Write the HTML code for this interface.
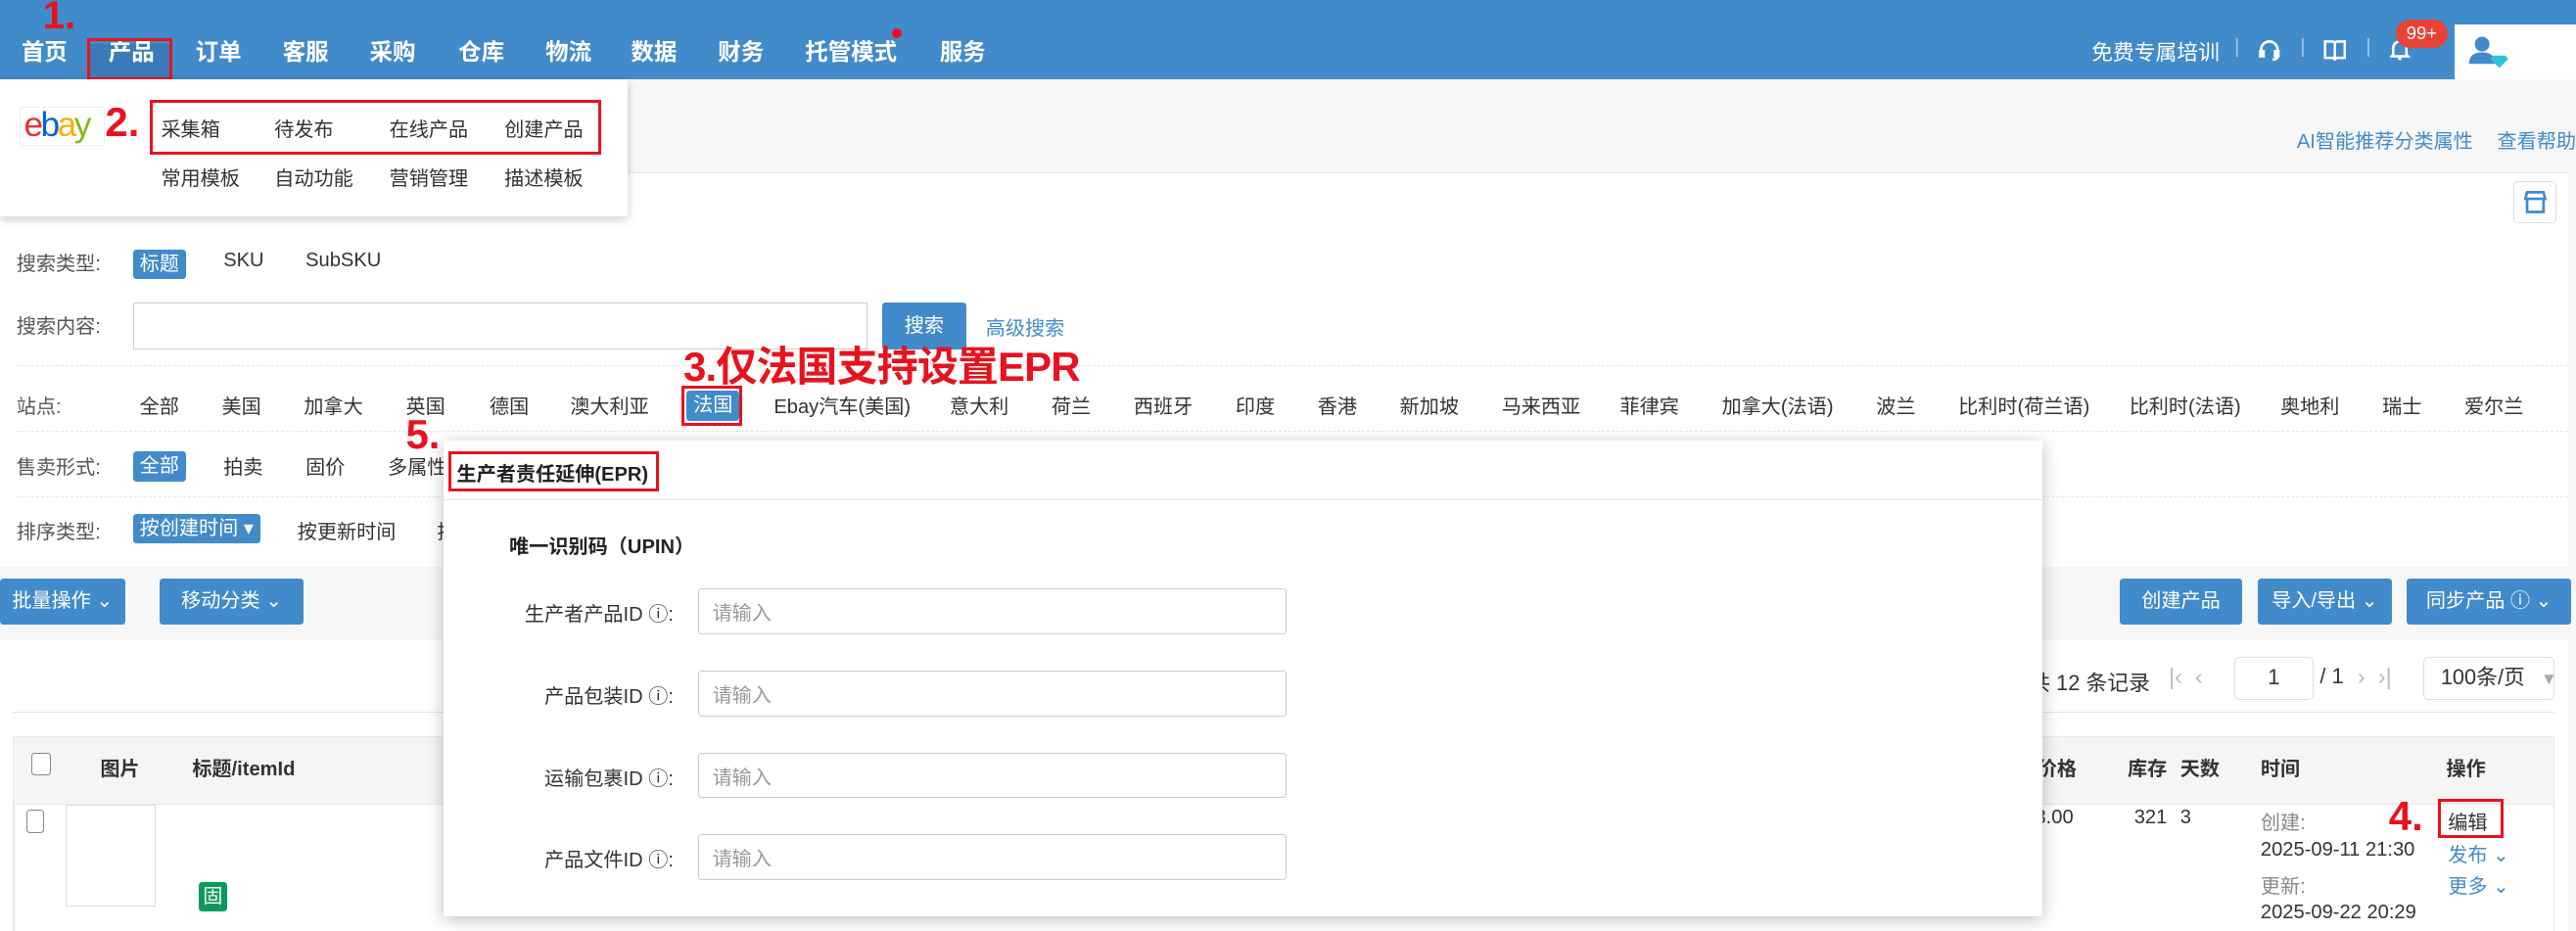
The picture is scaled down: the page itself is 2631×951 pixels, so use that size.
<!DOCTYPE html>
<html><head><meta charset="utf-8"><style>
*{margin:0;padding:0;box-sizing:border-box}
html,body{width:2631px;height:951px;overflow:hidden;background:#f7f7f7}
#w{zoom:1.678;width:1568px;height:567px;position:relative;font-family:"Liberation Sans","Noto Sans CJK SC",sans-serif;font-size:12px;color:#333}
.a{position:absolute;white-space:nowrap}
.nav{position:absolute;left:0;top:0;width:1568px;height:48px;background:#428bca}
.nv{position:absolute;top:20px;color:#fff;font-weight:bold;font-size:14px}
.red{color:#e8121e;font-weight:bold}
.rb{position:absolute;border:2px solid #e8121e}
.tag{position:absolute;background:#428bca;color:#fff;padding:0 4px;height:18px;line-height:18px;border-radius:2px}
.lbl{position:absolute;left:10px;color:#555}
.dot{position:absolute;left:10px;width:1553px;border-top:1px dashed #e4e4e4}
.btn{position:absolute;background:#428bca;color:#fff;height:28px;line-height:28px;text-align:center;border-radius:2px;font-size:12px}
.inp{position:absolute;border:1px solid #ccc;background:#fff;border-radius:2px;color:#999;padding-left:8px;display:flex;align-items:center}
.blue{color:#428bca}
.gray{color:#888}
</style></head><body><div id="w">
<div class="nav"></div>
<div class="a" style="left:53px;top:27px;width:51px;height:21px;background:#3a7cb8"></div>
<div class="nv" style="left:13px">首页</div>
<div class="nv" style="left:66px">产品</div>
<div class="nv" style="left:119px">订单</div>
<div class="nv" style="left:172px">客服</div>
<div class="nv" style="left:225px">采购</div>
<div class="nv" style="left:279px">仓库</div>
<div class="nv" style="left:332px">物流</div>
<div class="nv" style="left:384px">数据</div>
<div class="nv" style="left:437px">财务</div>
<div class="nv" style="left:490px">托管模式</div>
<div class="a" style="left:543px;top:17px;width:6px;height:6px;border-radius:3px;background:#e8121e"></div>
<div class="nv" style="left:572px">服务</div>
<div class="rb" style="left:53px;top:23px;width:52px;height:26px"></div>
<div class="a red" style="left:26px;top:-4px;font-size:24px">1.</div>
<div class="a" style="left:1273px;top:22px;color:#fff;font-size:13px">免费专属培训</div>
<div class="a" style="left:1360px;top:22px;color:#a8c8e8">|</div>
<div class="a" style="left:1400px;top:22px;color:#a8c8e8">|</div>
<div class="a" style="left:1440px;top:22px;color:#a8c8e8">|</div>
<svg class="a" style="left:1374px;top:23px" width="14" height="14" viewBox="0 0 14 14" fill="none" stroke="#fff" stroke-width="1.6"><path d="M2 9V7a5 5 0 0 1 10 0v2"/><rect x="1.5" y="8" width="2" height="3" fill="#fff"/><rect x="10.5" y="8" width="2" height="3" fill="#fff"/><path d="M12 11q0 2-3 2"/></svg>
<svg class="a" style="left:1414px;top:23px" width="14" height="14" viewBox="0 0 14 14" fill="none" stroke="#fff" stroke-width="1.5"><path d="M1 2h5l1 1 1-1h5v10H8l-1 1-1-1H1z M7 3v9"/></svg>
<svg class="a" style="left:1455px;top:23px" width="12" height="14" viewBox="0 0 12 14" fill="none" stroke="#fff" stroke-width="1.5"><path d="M2 10V6a4 4 0 0 1 8 0v4l1 1H1z M5 12.5h2"/></svg>
<div class="a" style="left:1458px;top:12px;width:32px;height:17px;border-radius:9px;background:#ea4335;color:#fff;font-size:11px;text-align:center;line-height:17px">99+</div>
<div class="a" style="left:1494px;top:15px;width:74px;height:33px;background:#fff"></div>
<svg class="a" style="left:1502px;top:21px" width="26" height="22" viewBox="0 0 26 22"><circle cx="9" cy="6" r="4.5" fill="#428bca"/><path d="M1 18q0-7 8-7t8 7z" fill="#428bca"/><path d="M16 13h7l2 2-5.5 5.5L14 15z" fill="#2cc6d8"/></svg>

<div class="a blue" style="left:1398px;top:76px">AI智能推荐分类属性</div>
<div class="a blue" style="left:1520px;top:76px">查看帮助</div>

<div class="a" style="left:0;top:105px;width:1563px;height:240px;background:#fff;border-top:1px solid #e6e6e6"></div>
<div class="a" style="left:1530px;top:110px;width:26px;height:26px;border:1px solid #ddd;border-radius:3px;background:#fff"></div>
<svg class="a" style="left:1535px;top:115px" width="16" height="16" viewBox="0 0 16 16" fill="none" stroke="#428bca" stroke-width="1.6"><path d="M3 2h10l1 4H2z M3 6v8h10V6"/></svg>

<div class="lbl" style="top:151px">搜索类型:</div>
<div class="tag" style="left:81px;top:152px">标题</div>
<div class="a" style="left:136px;top:152px">SKU</div>
<div class="a" style="left:186px;top:152px">SubSKU</div>
<div class="lbl" style="top:189px">搜索内容:</div>
<div class="a" style="left:81px;top:184px;width:447px;height:29px;border:1px solid #ccc;background:#fff"></div>
<div class="btn" style="left:537px;top:184px;width:51px;height:29px;line-height:29px">搜索</div>
<div class="a blue" style="left:600px;top:190px">高级搜索</div>
<div class="dot" style="top:222px"></div>
<div class="lbl" style="top:238px">站点:</div>
<div class="a" style="left:85px;top:238px">全部</div>
<div class="a" style="left:135px;top:238px">美国</div>
<div class="a" style="left:185px;top:238px">加拿大</div>
<div class="a" style="left:247px;top:238px">英国</div>
<div class="a" style="left:298px;top:238px">德国</div>
<div class="a" style="left:347px;top:238px">澳大利亚</div>
<div class="tag" style="left:418px;top:238px">法国</div>
<div class="rb" style="left:415px;top:235px;width:37px;height:24px"></div>
<div class="a" style="left:471px;top:238px">Ebay汽车(美国)</div>
<div class="a" style="left:578px;top:238px">意大利</div>
<div class="a" style="left:640px;top:238px">荷兰</div>
<div class="a" style="left:690px;top:238px">西班牙</div>
<div class="a" style="left:752px;top:238px">印度</div>
<div class="a" style="left:802px;top:238px">香港</div>
<div class="a" style="left:852px;top:238px">新加坡</div>
<div class="a" style="left:914px;top:238px">马来西亚</div>
<div class="a" style="left:986px;top:238px">菲律宾</div>
<div class="a" style="left:1048px;top:238px">加拿大(法语)</div>
<div class="a" style="left:1142px;top:238px">波兰</div>
<div class="a" style="left:1192px;top:238px">比利时(荷兰语)</div>
<div class="a" style="left:1296px;top:238px">比利时(法语)</div>
<div class="a" style="left:1388px;top:238px">奥地利</div>
<div class="a" style="left:1450px;top:238px">瑞士</div>
<div class="a" style="left:1500px;top:238px">爱尔兰</div>
<div class="a red" style="left:416px;top:203px;font-size:25px;letter-spacing:-0.5px">3.仅法国支持设置EPR</div>
<div class="dot" style="top:262px"></div>
<div class="lbl" style="top:275px">售卖形式:</div>
<div class="tag" style="left:81px;top:275px">全部</div>
<div class="a" style="left:136px;top:275px">拍卖</div>
<div class="a" style="left:186px;top:275px">固价</div>
<div class="a" style="left:236px;top:275px">多属性</div>
<div class="dot" style="top:302px"></div>
<div class="lbl" style="top:314px">排序类型:</div>
<div class="tag" style="left:81px;top:313px">按创建时间 ▾</div>
<div class="a" style="left:181px;top:314px">按更新时间</div>
<div class="a" style="left:266px;top:314px">按</div>

<div class="btn" style="left:0;top:352px;width:76px">批量操作 ⌄</div>
<div class="btn" style="left:97px;top:352px;width:88px">移动分类 ⌄</div>
<div class="btn" style="left:1290px;top:352px;width:75px">创建产品</div>
<div class="btn" style="left:1374px;top:352px;width:82px">导入/导出 ⌄</div>
<div class="btn" style="left:1465px;top:352px;width:100px">同步产品 ⓘ ⌄</div>

<div class="a" style="left:0;top:390px;width:1563px;height:177px;background:#fff"></div>
<div class="a" style="left:1235px;top:406px;font-size:13px">共 12 条记录</div>
<div class="a" style="left:1320px;top:404px;color:#bbb;font-size:14px">|‹ &nbsp;‹</div>
<div class="a" style="left:1360px;top:400px;width:48px;height:26px;border:1px solid #ddd;border-radius:3px;text-align:center;line-height:24px;font-size:13px">1</div>
<div class="a" style="left:1412px;top:404px;font-size:13px">/ 1</div>
<div class="a" style="left:1435px;top:404px;color:#bbb;font-size:14px">› &nbsp;›|</div>
<div class="a" style="left:1475px;top:400px;width:80px;height:26px;border:1px solid #ddd;border-radius:3px;line-height:24px;padding-left:10px;font-size:13px">100条/页 <span style="color:#aaa;font-size:10px;margin-left:6px">▼</span></div>
<div class="a" style="left:8px;top:433px;width:1547px;border-top:1px solid #e4e4e4"></div>
<div class="a" style="left:8px;top:448px;width:1547px;height:42px;background:#f5f5f5;border:1px solid #e8e8e8"></div>
<div class="a" style="left:8px;top:490px;width:1px;height:77px;background:#e8e8e8"></div>
<div class="a" style="left:1554px;top:490px;width:1px;height:77px;background:#e8e8e8"></div>
<div class="a" style="left:19px;top:458px;width:12px;height:14px;border:1px solid #888;border-radius:2px;background:#fff"></div>
<div class="a" style="left:61px;top:458px;font-weight:bold">图片</div>
<div class="a" style="left:117px;top:458px;font-weight:bold">标题/itemId</div>
<div class="a" style="left:1240px;top:458px;font-weight:bold">价格</div>
<div class="a" style="left:1295px;top:458px;font-weight:bold">库存</div>
<div class="a" style="left:1327px;top:458px;font-weight:bold">天数</div>
<div class="a" style="left:1376px;top:458px;font-weight:bold">时间</div>
<div class="a" style="left:1489px;top:458px;font-weight:bold">操作</div>
<div class="a" style="left:16px;top:493px;width:11px;height:14px;border:1px solid #888;border-radius:2px"></div>
<div class="a" style="left:40px;top:490px;width:55px;height:62px;border:1px solid #ddd"></div>
<div class="a" style="left:121px;top:537px;width:17px;height:18px;background:#0a9a5c;color:#fff;text-align:center;line-height:18px;border-radius:2px">固</div>
<div class="a" style="left:1232px;top:491px">23.00</div>
<div class="a" style="left:1299px;top:491px">321</div>
<div class="a" style="left:1327px;top:491px">3</div>
<div class="a gray" style="left:1376px;top:491px">创建:</div>
<div class="a" style="left:1376px;top:511px">2025-09-11 21:30</div>
<div class="a gray" style="left:1376px;top:530px">更新:</div>
<div class="a" style="left:1376px;top:549px">2025-09-22 20:29</div>
<div class="a" style="left:1490px;top:491px">编辑</div>
<div class="rb" style="left:1484px;top:486px;width:40px;height:24px"></div>
<div class="a red" style="left:1454px;top:483px;font-size:25px">4.</div>
<div class="a blue" style="left:1490px;top:511px">发布 ⌄</div>
<div class="a blue" style="left:1490px;top:530px">更多 ⌄</div>

<div class="a" style="left:270px;top:268px;width:973px;height:290px;background:#fff;box-shadow:0 2px 10px rgba(0,0,0,.25)"></div>
<div class="a" style="left:270px;top:304px;width:973px;border-top:1px solid #e4e4e4"></div>
<div class="a" style="left:278px;top:279px;font-weight:bold;color:#222">生产者责任延伸(EPR)</div>
<div class="rb" style="left:273px;top:275px;width:128px;height:24px"></div>
<div class="a red" style="left:247px;top:250px;font-size:25px">5.</div>
<div class="a" style="left:310px;top:323px;font-weight:bold;color:#222">唯一识别码（UPIN）</div>
<div class="a" style="left:270px;top:364px;width:140px;text-align:right">生产者产品ID ⓘ:</div>
<div class="inp" style="left:425px;top:358px;width:358px;height:28px">请输入</div>
<div class="a" style="left:270px;top:414px;width:140px;text-align:right">产品包装ID ⓘ:</div>
<div class="inp" style="left:425px;top:408px;width:358px;height:28px">请输入</div>
<div class="a" style="left:270px;top:464px;width:140px;text-align:right">运输包裹ID ⓘ:</div>
<div class="inp" style="left:425px;top:458px;width:358px;height:28px">请输入</div>
<div class="a" style="left:270px;top:514px;width:140px;text-align:right">产品文件ID ⓘ:</div>
<div class="inp" style="left:425px;top:508px;width:358px;height:28px">请输入</div>

<div class="a" style="left:0;top:48px;width:382px;height:84px;background:#fff;box-shadow:0 2px 6px rgba(0,0,0,.2)"></div>
<div class="a" style="left:12px;top:65px;width:52px;height:24px;border:1px solid #eee;font-size:21px;letter-spacing:-1.5px;line-height:22px;padding-left:2px;font-family:'Liberation Sans',sans-serif"><span style="color:#e53238">e</span><span style="color:#0064d2">b</span><span style="color:#f5af02">a</span><span style="color:#86b817">y</span></div>
<div class="a red" style="left:64px;top:60px;font-size:25px">2.</div>
<div class="a" style="left:98px;top:69px">采集箱</div>
<div class="a" style="left:167px;top:69px">待发布</div>
<div class="a" style="left:237px;top:69px">在线产品</div>
<div class="a" style="left:307px;top:69px">创建产品</div>
<div class="rb" style="left:91px;top:61px;width:275px;height:33px"></div>
<div class="a" style="left:98px;top:99px">常用模板</div>
<div class="a" style="left:167px;top:99px">自动功能</div>
<div class="a" style="left:237px;top:99px">营销管理</div>
<div class="a" style="left:307px;top:99px">描述模板</div>
</div></body></html>
